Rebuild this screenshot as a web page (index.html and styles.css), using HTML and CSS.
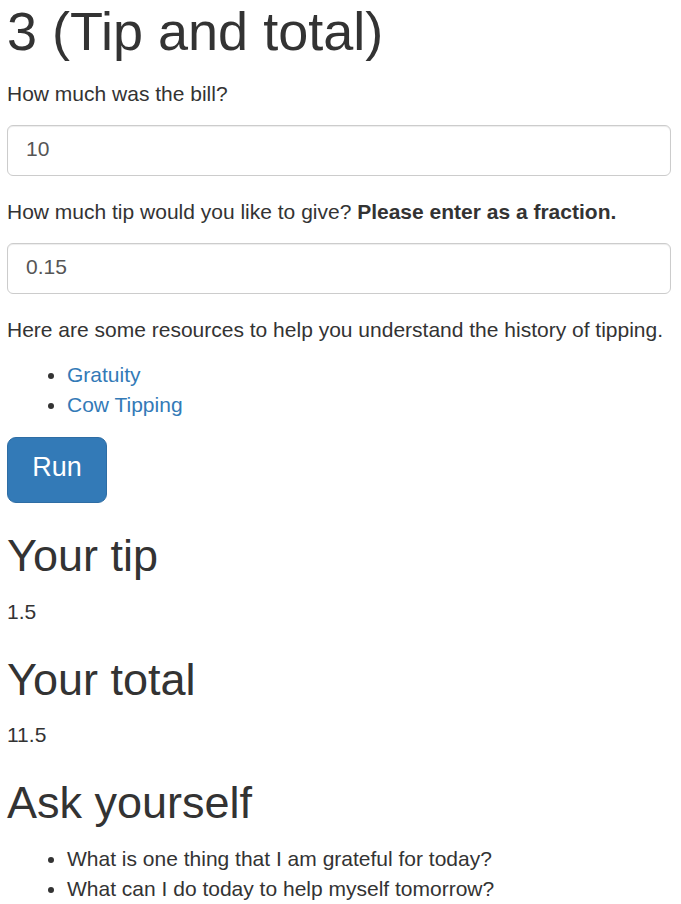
FILE: index.html
```html
<!DOCTYPE html>
<html>
<head>
<meta charset="utf-8">
<title>3 (Tip and total)</title>
<link rel="stylesheet" href="styles.css">
</head>
<body>
<div class="page">
  <h1 class="title">3 (Tip and total)</h1>
  <p class="label">How much was the bill?</p>
  <input class="field" type="text" value="10">
  <p class="label">How much tip would you like to give? <strong>Please enter as a fraction.</strong></p>
  <input class="field" type="text" value="0.15">
  <p class="text">Here are some resources to help you understand the history of tipping.</p>
  <ul class="list links">
    <li><a href="#">Gratuity</a></li>
    <li><a href="#">Cow Tipping</a></li>
  </ul>
  <button class="btn-run" type="button">Run</button>
  <h2 class="heading">Your tip</h2>
  <p class="text">1.5</p>
  <h2 class="heading">Your total</h2>
  <p class="text">11.5</p>
  <h2 class="heading">Ask yourself</h2>
  <ul class="list">
    <li>What is one thing that I am grateful for today?</li>
    <li>What can I do today to help myself tomorrow?</li>
  </ul>
</div>
</body>
</html>
```
FILE: styles.css
```css
html, body {
  margin: 0;
  padding: 0;
  background: #fff;
}
body {
  font-family: "Liberation Sans", Arial, Helvetica, sans-serif;
  font-size: 21px;
  line-height: 30px;
  color: #333;
}
.page {
  padding: 0 10px 0 7px;
}
.title {
  font-size: 54px;
  line-height: 59px;
  font-weight: 500;
  margin: 2px 0 18px;
}
.label {
  margin: 0 0 16px;
}
.label strong {
  font-weight: bold;
}
.field {
  display: block;
  box-sizing: border-box;
  width: 100%;
  height: 51px;
  margin: 0 0 21px;
  padding: 7px 18px 11px;
  font-family: inherit;
  font-size: 21px;
  line-height: 30px;
  color: #555;
  background: #fff;
  border: 1px solid #ccc;
  border-radius: 6px;
  box-shadow: inset 0 1px 1px rgba(0, 0, 0, 0.075);
  outline: none;
}
.text {
  margin: 0 0 15px;
}
.list {
  margin: 0 0 17px;
  padding-left: 60px;
}
.links a {
  color: #337ab7;
  text-decoration: none;
}
.btn-run {
  display: block;
  box-sizing: border-box;
  width: 100px;
  height: 66px;
  padding: 11px 0 17px;
  font-family: inherit;
  font-size: 27px;
  line-height: 36px;
  color: #fff;
  background: #337ab7;
  border: 1px solid #2e6da4;
  border-radius: 9px;
  text-align: center;
}
.heading {
  font-size: 45px;
  line-height: 49.5px;
  font-weight: 500;
  margin: 28px 0 16px;
}
```
